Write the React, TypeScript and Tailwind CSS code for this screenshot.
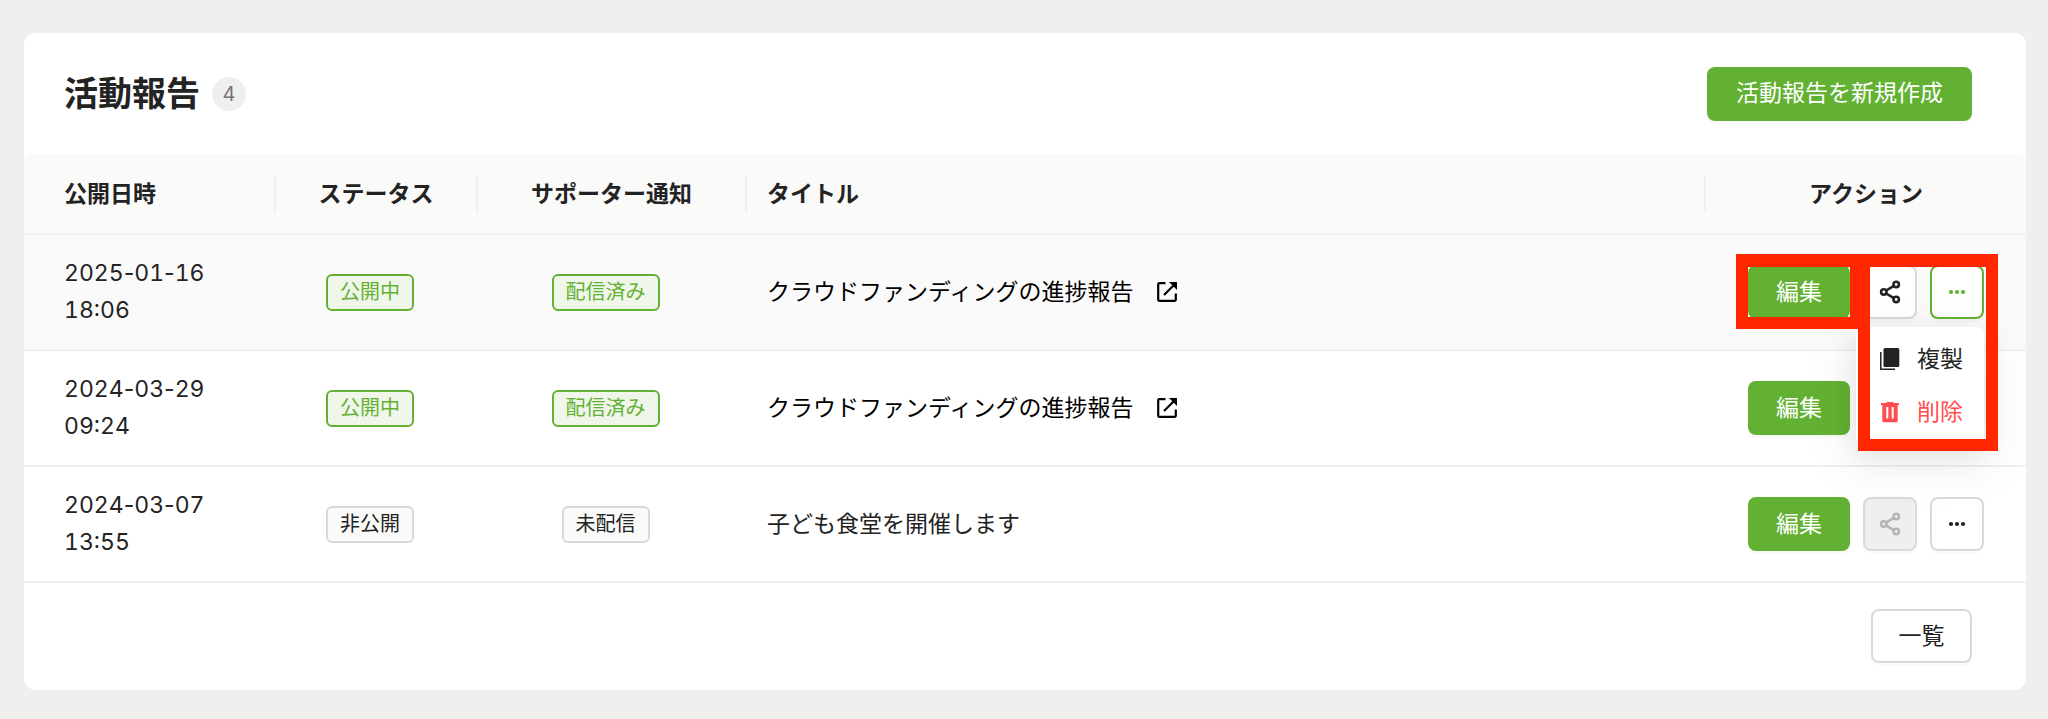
import React from "react";

interface Report {
  date: string;
  time: string;
  isPublic: boolean;
  isSent: boolean;
  title: string;
  menuOpen?: boolean;
}

const reports: Report[] = [
  {
    date: "2025-01-16",
    time: "18:06",
    isPublic: true,
    isSent: true,
    title: "クラウドファンディングの進捗報告",
    menuOpen: true,
  },
  {
    date: "2024-03-29",
    time: "09:24",
    isPublic: true,
    isSent: true,
    title: "クラウドファンディングの進捗報告",
  },
  {
    date: "2024-03-07",
    time: "13:55",
    isPublic: false,
    isSent: false,
    title: "子ども食堂を開催します",
  },
];

const primaryButton =
  "h-[54px] rounded-lg bg-[#63b132] text-[23px] leading-none text-white shadow-[0_3px_0_rgba(0,0,0,0.02)]";
const iconButton =
  "flex size-[54px] items-center justify-center rounded-lg border-2 shadow-[0_3px_0_rgba(0,0,0,0.02)]";

// -----------------------------------------------------------------
const Tag = ({ active, label }: { active: boolean; label: string }) => (
  <span
    className={`mr-[14px] inline-flex h-[37px] items-center rounded-md border-2 px-3 text-[20px] leading-none ${
      active
        ? "border-[#63b132] bg-[#f0f7ea] text-[#63b132]"
        : "border-[#d9d9d8] bg-[#fafaf9] text-[#232323]"
    }`}
  >
    {label}
  </span>
);

// Digits are tabular, the hyphens keep their normal width
const DateText = ({ date }: { date: string }) => (
  <>
    {date.split("-").map((part, i) => (
      <React.Fragment key={i}>
        {i > 0 && <span className="normal-nums">-</span>}
        {part}
      </React.Fragment>
    ))}
  </>
);

const Dots = () => (
  <svg width="18" height="6" viewBox="0 0 18 6" fill="currentColor">
    <circle cx="3" cy="3" r="2.100" />
    <circle cx="9" cy="3" r="2.100" />
    <circle cx="15" cy="3" r="2.100" />
  </svg>
);

const ShareIcon = () => (
  <svg
    width="22"
    height="24"
    viewBox="0 0 22 24"
    fill="none"
    stroke="currentColor"
    strokeWidth="2.600"
  >
    <circle cx="4.800" cy="12" r="2.700" />
    <circle cx="17.200" cy="4.500" r="2.700" />
    <circle cx="17.200" cy="19.500" r="2.700" />
    <path d="M7.200 10.500l7.600-4.600M7.200 13.500l7.600 4.600" />
  </svg>
);

const OpenIcon = () => (
  <svg width="20" height="20" viewBox="0 0 20 20" fill="none">
    <path
      d="M8.500 1.200H2.200a1 1 0 0 0-1 1v15.600a1 1 0 0 0 1 1h15.600a1 1 0 0 0 1-1v-6.300M7 13L18 2"
      stroke="currentColor"
      strokeWidth="2.200"
    />
    <path d="M12 0h8v8z" fill="currentColor" />
  </svg>
);

const CopyIcon = () => (
  <svg width="20" height="23" viewBox="0 0 20 23" fill="none">
    <rect x="3.500" width="15.800" height="19" rx="1.500" fill="currentColor" />
    <path d="M.8 4v17.200h14.200" stroke="currentColor" strokeWidth="1.500" />
  </svg>
);

const TrashIcon = () => (
  <svg width="20" height="21" viewBox="0 0 20 21" fill="none">
    <path
      fillRule="evenodd"
      fill="currentColor"
      d="M7 0h6l1 1h5v2h-1.300v16a1.300 1.300 0 0 1-1.300 1.300H3.600A1.300 1.300 0 0 1 2.300 19V3H1V1h5zM6.300 5v11.500h2V5zM11.700 5v11.500h2V5z"
    />
  </svg>
);

// Dropdown with the duplicate / delete actions
const ActionMenu = () => (
  <ul className="absolute top-[62px] right-0 z-10 w-32 rounded-lg bg-white py-1.5 shadow-[0_10px_27px_rgba(0,0,0,0.08),0_5px_10px_-7px_rgba(0,0,0,0.12),0_15px_47px_13px_rgba(0,0,0,0.05)]">
    <li>
      <button className="flex h-[53px] w-full items-center gap-[17px] pl-6 text-[23px] leading-none text-[#232323]">
        <CopyIcon />
        複製
      </button>
    </li>
    <li>
      <button className="flex h-[53px] w-full items-center gap-[17px] pl-6 text-[23px] leading-none text-[#ff4d4f]">
        <TrashIcon />
        削除
      </button>
    </li>
  </ul>
);

const Actions = ({ report }: { report: Report }) => (
  <div className="relative mx-auto flex w-fit gap-[13px]">
    <button className={`${primaryButton} w-[102px]`}>編集</button>
    <button
      aria-label="シェア"
      disabled={!report.isPublic}
      className={`${iconButton} border-[#d9d9d8] ${
        report.isPublic ? "bg-white text-[#232323]" : "bg-[#efefed] text-[#b5b5b4]"
      }`}
    >
      <ShareIcon />
    </button>
    <button
      aria-label="メニュー"
      className={`${iconButton} bg-white ${
        report.menuOpen
          ? "border-[#63b132] text-[#63b132]"
          : "border-[#d9d9d8] text-[#232323]"
      }`}
    >
      <Dots />
    </button>
    {report.menuOpen && (
      <>
        <ActionMenu />
        {/* Red frames round the edit button and the menu */}
        <div className="pointer-events-none absolute -top-[11px] -left-3 z-20 h-[75px] w-[126px] border-12 border-t-[13px] border-[#ff2600]" />
        <div className="pointer-events-none absolute -top-[11px] -right-[14px] z-20 h-[197px] w-[140px] border-12 border-t-[13px] border-[#ff2600]" />
      </>
    )}
  </div>
);

const App = () => {
  return (
    <div className="min-h-screen bg-[#efefed] pt-[33px] pr-[22px] pb-7 pl-6 font-['Inter','Noto_Sans_CJK_JP',sans-serif] text-[#232323]">
      <section className="rounded-xl bg-white">
        <header className="flex h-[121px] items-center justify-between pr-[54px] pl-10">
          <div className="flex items-center gap-3">
            <h1 className="text-[34px] leading-none font-bold">活動報告</h1>
            <span className="flex size-[34px] items-center justify-center rounded-full bg-[#efefed] text-[20px] text-[#757574]">
              4
            </span>
          </div>
          <button className={`${primaryButton} px-[29px]`}>
            活動報告を新規作成
          </button>
        </header>

        <table className="w-full table-fixed border-separate border-spacing-0">
          <thead>
            <tr className="h-[81px] text-[23px] [&>th]:border-b-2 [&>th]:border-[#f0f0ef] [&>th]:bg-[#fafaf9] [&>th]:p-0 [&>th]:pt-px">
              <th className="w-[252px] rounded-tl-lg text-left">
                <div className="flex h-[38px] items-center border-r-2 border-[#f0f0ef] pl-10">
                  公開日時
                </div>
              </th>
              <th className="w-[202px]">
                <div className="flex h-[38px] items-center justify-center border-r-2 border-[#f0f0ef]">
                  ステータス
                </div>
              </th>
              <th className="w-[269px]">
                <div className="flex h-[38px] items-center justify-center border-r-2 border-[#f0f0ef]">
                  サポーター通知
                </div>
              </th>
              <th>
                <div className="flex h-[38px] items-center border-r-2 border-[#f0f0ef] pl-5">
                  タイトル
                </div>
              </th>
              <th className="w-[320px] rounded-tr-lg">アクション</th>
            </tr>
          </thead>
          <tbody className="text-[23px] leading-[37px]">
            {reports.map((report) => (
              <tr
                key={report.date}
                className={`h-[116px] [&>td]:border-b-2 [&>td]:border-[#f0f0ef] ${
                  report.menuOpen ? "bg-[#fafafa]" : ""
                }`}
              >
                <td className="pl-10 tabular-nums">
                  <DateText date={report.date} />
                  <br />
                  {report.time}
                </td>
                <td className="text-center">
                  <Tag
                    active={report.isPublic}
                    label={report.isPublic ? "公開中" : "非公開"}
                  />
                </td>
                <td className="text-center">
                  <Tag
                    active={report.isSent}
                    label={report.isSent ? "配信済み" : "未配信"}
                  />
                </td>
                <td className="pl-5">
                  {report.isPublic ? (
                    <a href="#" className="flex items-center gap-6 text-black">
                      {report.title}
                      <OpenIcon />
                    </a>
                  ) : (
                    report.title
                  )}
                </td>
                <td>
                  <Actions report={report} />
                </td>
              </tr>
            ))}
          </tbody>
        </table>

        <footer className="flex justify-end pt-[26px] pr-[54px] pb-[27px]">
          <button className="h-[54px] w-[101px] rounded-lg border-2 border-[#d9d9d8] bg-white text-[23px] leading-none shadow-[0_3px_0_rgba(0,0,0,0.02)]">
            一覧
          </button>
        </footer>
      </section>
    </div>
  );
};

export default App;
